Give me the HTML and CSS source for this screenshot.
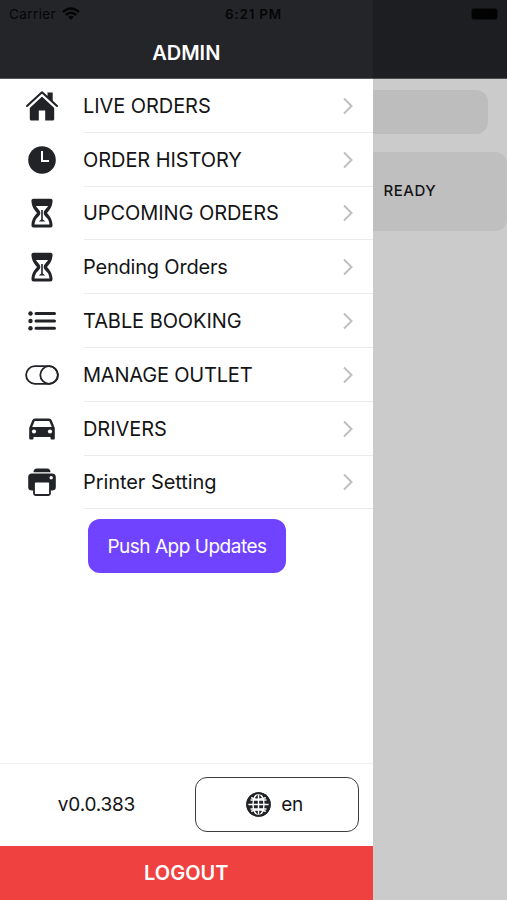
FILE: index.html
```html
<!DOCTYPE html>
<html lang="en">
    <head>
        <meta charset="utf-8" />
        <meta name="viewport" content="width=device-width, initial-scale=1" />
        <title>Admin</title>
        <link rel="stylesheet" href="styles.css">
    </head>
    <body>
        <svg class="sprite" width="0" height="0">
            <symbol id="chevron" viewBox="0 0 12 18"><path d="M2 1.500l7.500 7.500L2 16.500" fill="none" stroke="#bfbfc1" stroke-width="2"/></symbol>
            <symbol id="hourglass" viewBox="0 0 34 34">
                <path d="M8.500 2.700h17q2.500 0 2 3C27 11 25 13.500 22 17c3 3.500 5 6 5.500 11.500q.3 3-2 3h-17q-2.300 0-2-3C7 23 9 20.500 12 17 9 13.500 7 11 6.500 5.700q-.5-3 2-3z"/>
                <path fill="#fff" d="M11 10h12c-1.200 2.500-4.300 4.300-4.300 7s2.800 3.800 4.300 6.300q1.300 2.500 1.500 5.200h-15q.2-2.700 1.500-5.200c1.500-2.500 4.300-3.600 4.300-6.300S12.200 12.500 11 10z"/>
                <path d="M16.200 14h1.600v9.500l2.500 2h-6.600l2.500-2z"/>
            </symbol>
        </svg>
        <div class="status">
            <span class="carrier">Carrier
                <svg width="18" height="13" viewBox="0 0 18 13" fill="none" stroke="#050506" stroke-width="2.400"><path d="M1 5q8-7 16 0M3.800 8q5.200-4.500 10.400 0"/><path d="M6.200 10q2.800-2.400 5.600 0L9 12.800z" fill="#050506" stroke="none"/></svg>
            </span>
            <span class="time">6:21 PM</span>
            <span class="battery"></span>
        </div>
        <div class="app">
            <aside>
                <header>ADMIN</header>
                <ul>
                    <li><svg class="icon" viewBox="0 0 34 34"><path d="M22.500 3.500h5.200v10l-5.200-5zM4.800 19L17 7.500 29.200 19v11q0 1.500-1.500 1.500h-7.500v-10h-6.400v10H6.300q-1.500 0-1.500-1.500z"/><path d="M2.500 17.500L17 4.500l14.500 13" transform="translate(0 1.700)" fill="none" stroke="#fff" stroke-width="1.200"/><path d="M2 17L17 3.300 32 17" fill="none" stroke="#212327" stroke-width="2.100" stroke-linecap="round" stroke-linejoin="round"/></svg>
                        <span>LIVE ORDERS</span><svg class="chevron"><use href="#chevron"/></svg></li>
                    <li><svg class="icon" viewBox="0 0 34 34"><circle cx="17" cy="17" r="13.800"/><path d="M17 8v10h7" fill="none" stroke="#fff" stroke-width="2"/></svg>
                        <span>ORDER HISTORY</span><svg class="chevron"><use href="#chevron"/></svg></li>
                    <li><svg class="icon"><use href="#hourglass"/></svg>
                        <span class="upcoming">UPCOMING ORDERS</span><svg class="chevron"><use href="#chevron"/></svg></li>
                    <li><svg class="icon"><use href="#hourglass"/></svg>
                        <span class="mixed">Pending Orders</span><svg class="chevron"><use href="#chevron"/></svg></li>
                    <li><svg class="icon" viewBox="0 0 34 34"><circle cx="5.500" cy="9.500" r="2.200"/><circle cx="5.500" cy="17" r="2.200"/><circle cx="5.500" cy="24.300" r="2.200"/><path d="M11 9.500h18.500M11 17h18.500M11 24.300h18.500" stroke="#212327" stroke-width="3" stroke-linecap="round"/></svg>
                        <span>TABLE BOOKING</span><svg class="chevron"><use href="#chevron"/></svg></li>
                    <li><svg class="icon" viewBox="0 0 34 34"><g fill="none" stroke="#212327" stroke-width="1.800"><rect x="1.100" y="8.200" width="31.800" height="17.600" rx="8.800"/><circle cx="24.100" cy="17" r="8.800"/></g></svg>
                        <span class="mixed">MANAGE OUTLET</span><svg class="chevron"><use href="#chevron"/></svg></li>
                    <li><svg class="icon" viewBox="0 0 34 34"><path d="M10 6.500h14q2 0 2.800 2l3 7.500v10.500q0 1-1 1h-2.300q-1 0-1-1V25h-17v1.500q0 1-1 1H5.200q-1 0-1-1V16l3-7.500q.8-2 2.800-2z"/><path d="M9.700 9h14.600l2.500 6H7.200z" fill="#fff"/><circle cx="9" cy="19.500" r="2.100" fill="#fff"/><circle cx="25" cy="19.500" r="2.100" fill="#fff"/></svg>
                        <span>DRIVERS</span><svg class="chevron"><use href="#chevron"/></svg></li>
                    <li><svg class="icon" viewBox="0 0 34 34"><path d="M8.500 7.300Q8.500 3.500 12 3.500h10q3.500 0 3.500 3.800zM7 8.500h20q3.800 0 3.800 3.700v10q0 3.300-3.800 3.300H7q-3.800 0-3.800-3.300v-10Q3.200 8.500 7 8.500z"/><rect x="9" y="16.500" width="16" height="13.500" rx="1.500" fill="#fff" stroke="#212327" stroke-width="1.800"/><circle cx="26.200" cy="12.800" r="1.700" fill="#fff"/></svg>
                        <span>Printer Setting</span><svg class="chevron"><use href="#chevron"/></svg></li>
                </ul>
                <button class="push">Push App Updates</button>
                <div class="bottom">
                    <span class="version">v0.0.383</span>
                    <button class="lang">
                        <svg width="25" height="25" viewBox="0 0 25 25" fill="none"><circle cx="12.500" cy="12.500" r="12.200" fill="#212327"/><g stroke="#fff" stroke-width="1.400"><path d="M12.500 2v21M2 12.500h21M4.500 8h16M4.500 17h16M5 5.500q7.500 3.500 15 0M5 19.500q7.500-3.500 15 0"/><ellipse cx="12.500" cy="12.500" rx="5.500" ry="10.500"/></g><circle cx="12.500" cy="12.500" r="11.200" stroke="#212327" stroke-width="2"/></svg>
                        <span>en</span>
                    </button>
                </div>
                <button class="logout">LOGOUT</button>
            </aside>
            <main>
                <div class="topbar"></div>
                <div class="search"></div>
                <div class="card">READY</div>
            </main>
        </div>
    </body>
</html>
```
FILE: styles.css
```css
* { margin: 0; padding: 0; box-sizing: border-box; }
body { font-family: Inter, "Liberation Sans", sans-serif; color: #141416; background: #cbcbcb; overflow: hidden; }
button { border: 0; font-family: inherit; color: inherit; }
.sprite { position: absolute; }

.status {
    position: absolute;
    top: 0;
    left: 0;
    width: 100%;
    height: 27px;
    padding: 0 9px;
    display: grid;
    grid-template-columns: 1fr auto 1fr;
    align-items: center;
    color: #050506;
    font-size: 13.5px;
}
.carrier { display: flex; align-items: center; gap: 6px; letter-spacing: 0.4px; }
.time { font-weight: 600; letter-spacing: 0.8px; }
.battery {
    justify-self: end;
    width: 27px;
    height: 12px;
    border: 1px solid #111214;
    border-radius: 3px;
    background: #020202;
}

.app { display: flex; height: 900px; }
aside {
    width: 372.5px;
    flex: none;
    display: flex;
    flex-direction: column;
    background: #fff;
}
header {
    height: 79px;
    padding-top: 27px;
    background: #242529;
    border-bottom: 1px solid #55565a;
    color: #fff;
    text-align: center;
    font-size: 20px;
    font-weight: 600;
    line-height: 52px;
}

ul { list-style: none; }
li {
    display: grid;
    grid-template-columns: 58px 1fr 32px;
    align-items: center;
    height: 53.8px;
    padding-left: 25px;
    font-size: 20px;
    letter-spacing: -0.07px;
    background: linear-gradient(#ebebec, #ebebec) 84px 100% / 100% 1px no-repeat;
}
.mixed { letter-spacing: -0.2px; }
.icon { width: 34px; height: 34px; fill: #212327; }
.chevron { width: 12px; height: 18px; margin-left: 1px; }

.push {
    width: 198px;
    height: 54px;
    margin: 10px 0 0 88px;
    border-radius: 12px;
    background: #6f43ff;
    color: #fff;
    font-size: 19px;
    letter-spacing: -0.48px;
}

.bottom {
    display: flex;
    align-items: center;
    height: 83px;
    margin-top: auto;
    padding-bottom: 1px;
    border-top: 1px solid #f0f0f0;
    font-size: 19px;
}
.version { width: 193px; margin-right: 2px; text-align: center; letter-spacing: -0.2px; }
.lang {
    display: flex;
    align-items: center;
    justify-content: center;
    gap: 10px;
    width: 164px;
    height: 55px;
    padding-right: 5px;
    border: 1px solid #3d3d3f;
    border-radius: 12px;
    background: #fff;
    font-size: 19px;
    letter-spacing: -0.5px;
}
.logout {
    height: 54px;
    background: #f04141;
    color: #fff;
    font-size: 20px;
    font-weight: 600;
}

main { flex: 1; background: #cbcbcb; }
.topbar { height: 79px; background: #1d1e21; border-bottom: 1px solid #4b4b4d; }
.search { width: 115px; height: 44px; margin-top: 11px; border-radius: 0 12px 12px 0; background: #bdbdbd; }
.card {
    height: 79px;
    margin-top: 18px;
    padding-left: 11px;
    border-radius: 0 12px 12px 0;
    background: #bfbfbf;
    font-size: 15px;
    font-weight: 500;
    letter-spacing: 0.5px;
    line-height: 77px;
}
```
